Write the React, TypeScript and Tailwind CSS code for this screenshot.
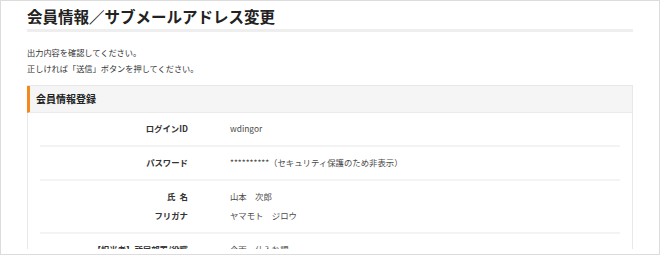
const ROWS: { label: string; value: string }[][] = [
  [{ label: "ログインID", value: "wdingor" }],
  [{ label: "パスワード", value: "**********（セキュリティ保護のため非表示）" }],
  [
    { label: "氏\u2002名", value: "山本　次郎" },
    { label: "フリガナ", value: "ヤマモト　ジロウ" },
  ],
  [{ label: "【担当者】所属部署/役職", value: "企画・仕入れ課" }],
];

export default function App() {
  return (
    <div className="h-[255px] w-[660px] overflow-hidden border border-[#dcdcdc] bg-white font-['Meiryo','Noto_Sans_CJK_JP',sans-serif] text-[#333]">
      <div className="h-[248px] overflow-hidden px-[26px]">
        <h1 className="pt-[4px] text-[15.5px] font-bold leading-[22px] text-[#222]">
          会員情報／サブメールアドレス変更
        </h1>
        <div className="mt-[2px] h-[3px] bg-[#eeeeee]" />

        <div className="mt-[12px] text-[8.2px] leading-[16px]">
          <p>出力内容を確認してください。</p>
          <p>正しければ「送信」ボタンを押してください。</p>
        </div>

        <section className="mt-[9px] border border-[#e8e8e8]" aria-label="会員情報登録">
          <h2 className="-ml-px h-[27px] border-b border-l-[3px] border-b-[#ebebeb] border-l-[#f28a1e] bg-[#f5f5f5] pl-[6px] text-[10px] font-bold leading-[26px] text-[#222]">
            会員情報登録
          </h2>
          <div className="px-[12px]">
            {ROWS.map((group, i) => (
              <div
                key={i}
                className="grid grid-cols-[148px_1fr] gap-x-[42px] gap-y-[7px] border-b-2 border-[#f3f3f3] pt-[9px] pb-[11px] text-[8.4px] leading-[12px]"
              >
                {group.map((r) => (
                  <div key={r.label} className="contents">
                    <span className="text-right font-bold text-[#333]">{r.label}</span>
                    <span className="text-[#4a4a4a]">{r.value}</span>
                  </div>
                ))}
              </div>
            ))}
          </div>
        </section>
      </div>
    </div>
  );
}
